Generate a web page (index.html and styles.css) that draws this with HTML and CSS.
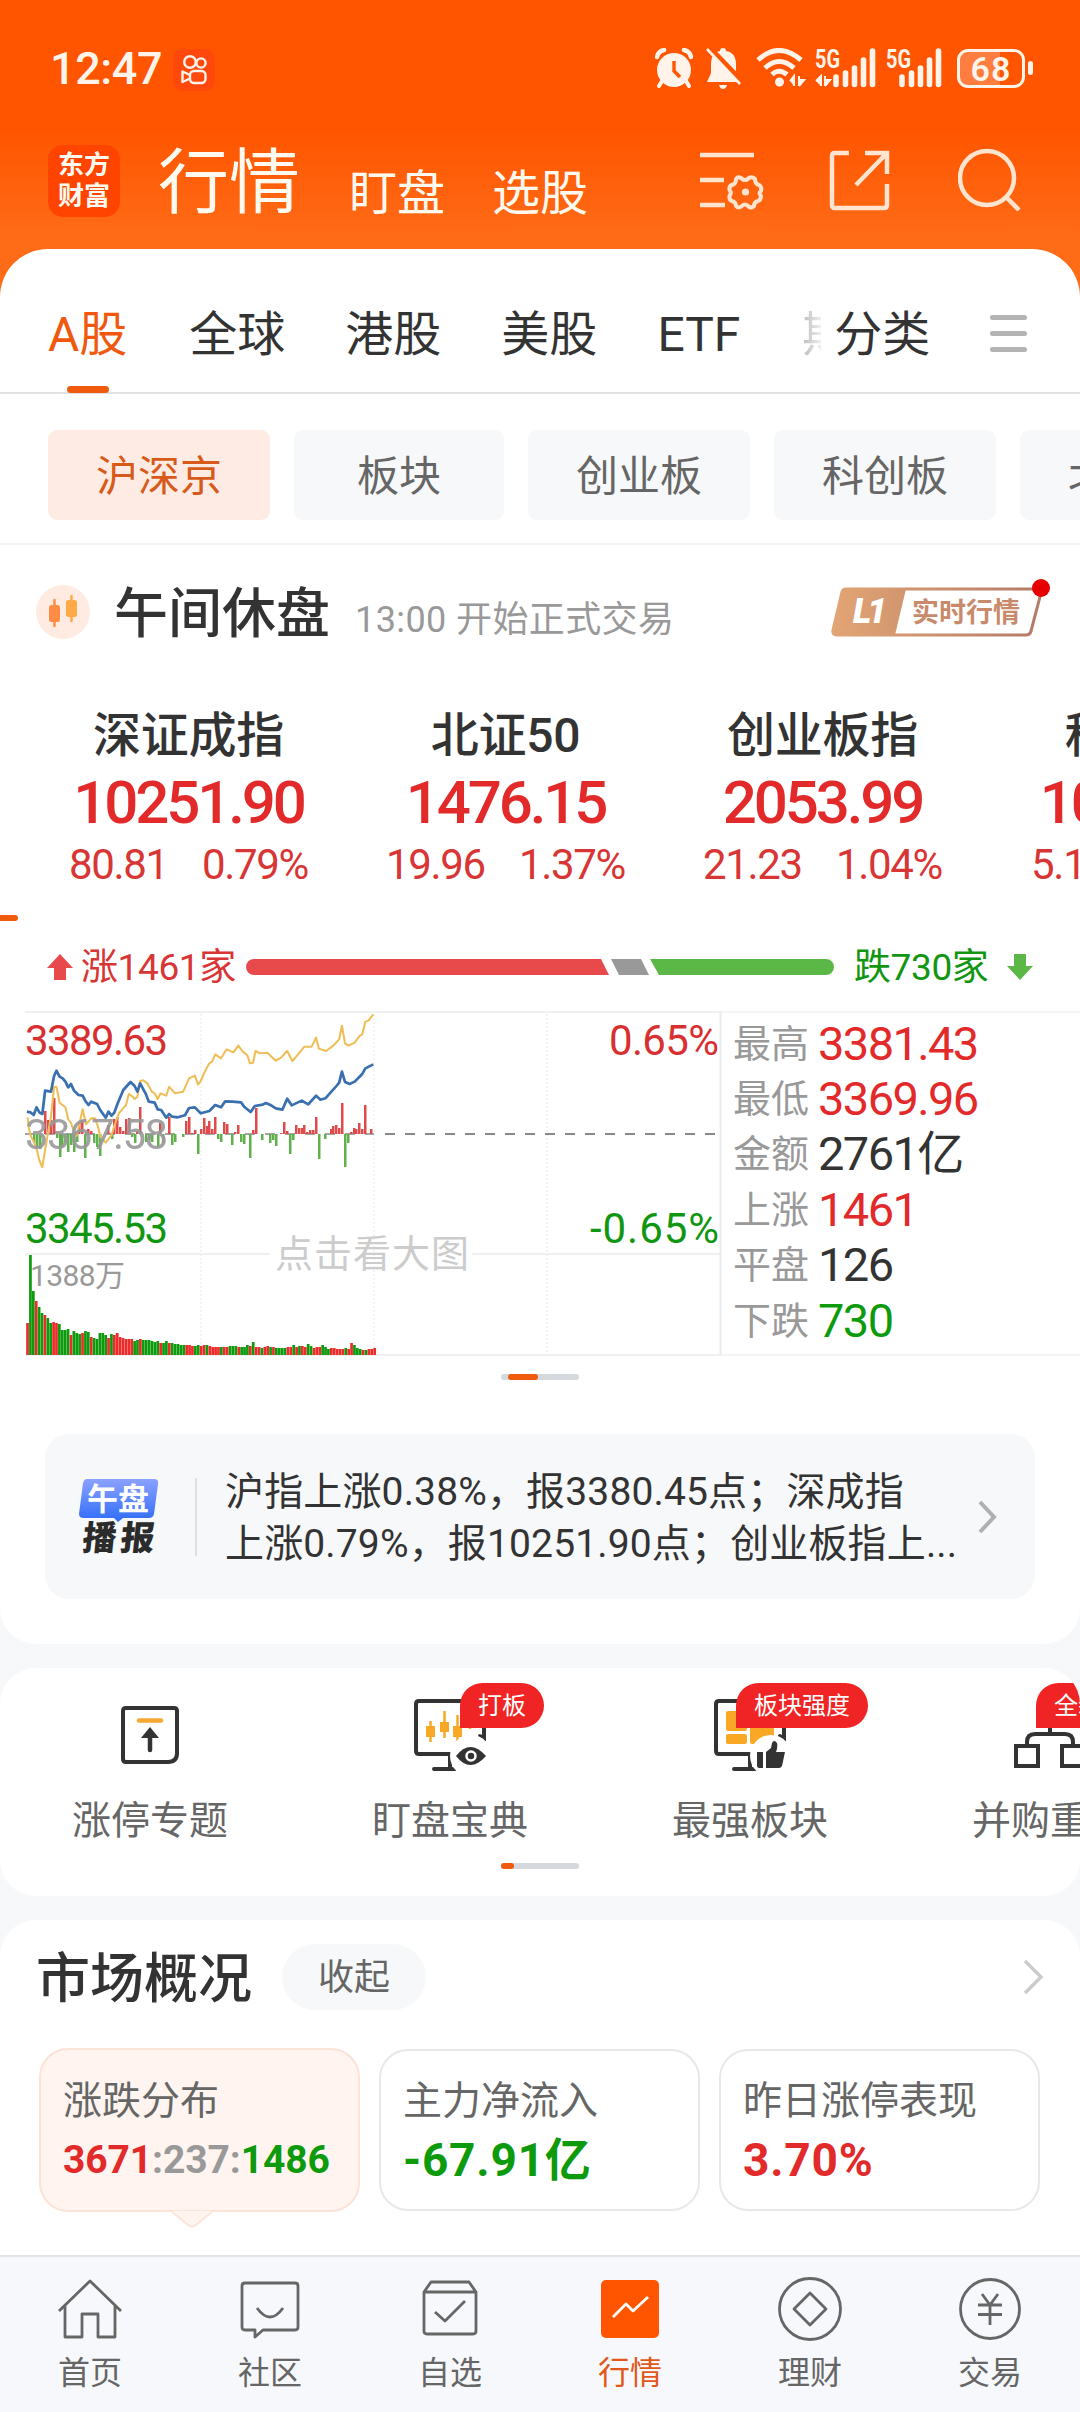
FILE: index.html
```
<!DOCTYPE html>
<html lang="zh-CN">
<head>
    <meta charset="UTF-8">
    <title>行情</title>
    <link rel="stylesheet" href="styles.css">
</head>
<body>
    <div class="header">
        <div class="status-bar">
            <div class="status-time">12:47</div>
            <div class="status-app">
                <svg width="42" height="42" viewBox="0 0 42 42" fill="none" stroke="#fff3ea" stroke-width="2.4">
                    <circle cx="17" cy="13" r="5.8"/>
                    <circle cx="28" cy="14" r="4.6"/>
                    <rect x="17" y="22" width="15.500" height="12" rx="4"/>
                    <path d="M17 26L9.500 22.500V33L17 29.500" stroke-linejoin="round"/>
                </svg>
            </div>
            <div class="status-icons">
                <svg class="icon-alarm" width="38" height="40" viewBox="0 0 38 40">
                    <circle cx="19" cy="22" r="17" fill="#fff3ea"/>
                    <path d="M2 9A9 9 0 0 1 9 2M36 9A9 9 0 0 0 29 2" stroke="#fff3ea" stroke-width="4.500" fill="none" stroke-linecap="round"/>
                    <path d="M7 33L4 38M31 33L34 38" stroke="#fff3ea" stroke-width="4" stroke-linecap="round"/>
                    <path d="M19 13V23L25 29" stroke="#ff5500" stroke-width="3.400" fill="none"/>
                </svg>
                <svg class="icon-bell" width="36" height="42" viewBox="0 0 36 42">
                    <path d="M17 1C19 1 20 2 20 4C27 5 30 10 30 17V26L34 35H1L5 26V17C5 10 8 5 14 4C14 2 15 1 17 1Z" fill="#fff3ea"/>
                    <path d="M13 38H21Q20 42 17 42Q14 42 13 38Z" fill="#fff3ea"/>
                    <path d="M3 0L37 35" stroke="#ff5500" stroke-width="5"/>
                    <path d="M1 2L34 37" stroke="#fff3ea" stroke-width="2.600"/>
                </svg>
                <svg class="icon-wifi" width="50" height="40" viewBox="0 0 50 40">
                    <path d="M2 12Q23 -7 45 12M9 20Q23 7 38 20M16 26.500Q23 20 31 26.500" fill="none" stroke="#fff3ea" stroke-width="5"/>
                    <circle cx="23.500" cy="34" r="4.500" fill="#fff3ea"/>
                    <path d="M34 33L38 28V38M43 38V28M43 38L48 32H43" fill="#fff3ea" stroke="#fff3ea" stroke-width="2"/>
                </svg>
                <svg class="icon-signal" width="62" height="40" viewBox="0 0 62 40">
                    <text x="0" y="20" class="signal-text" textLength="25" lengthAdjust="spacingAndGlyphs">5G</text>
                    <path d="M21 29V36.500M30.500 25V36.500M39.500 20V36.500M48.500 12V36.500M57.500 3V36.500" stroke="#fff3ea" stroke-width="5.600" stroke-linecap="round"/>
                    <path d="M1 33L6 28V38M10 38V28M10 38L15 32H10" fill="#fff3ea" stroke="#fff3ea" stroke-width="2"/>
                </svg>
                <svg class="icon-signal" width="57" height="40" viewBox="0 0 57 40">
                    <text x="0" y="20" class="signal-text" textLength="25" lengthAdjust="spacingAndGlyphs">5G</text>
                    <path d="M16 29V36.500M25.500 25V36.500M34.500 20V36.500M43.500 12V36.500M52.500 3V36.500" stroke="#fff3ea" stroke-width="5.600" stroke-linecap="round"/>
                </svg>
                <div class="battery"><span>68</span></div>
                <div class="battery-tip"></div>
            </div>
        </div>
        <div class="title-bar">
            <div class="logo"><span>东方</span><span>财富</span></div>
            <div class="title-main">行情</div>
            <div class="title-sub">盯盘</div>
            <div class="title-sub">选股</div>
            <div class="title-icons">
                <svg width="64" height="64" viewBox="0 0 64 64" fill="none" stroke="#ffe4d0" stroke-width="4.500">
                    <path d="M0 8H54M0 33H24M0 58H25"/>
                    <path d="M41 31Q45 35 49 31Q52 29 55 32Q55 37 59 38Q62 40 61 44Q58 46 61 49Q61 53 58 54Q54 55 54 59Q51 62 48 59Q45 56 42 59Q38 62 36 59Q36 55 32 54Q29 53 29.500 49Q32 46 29.500 43Q29 39 32 38Q36 37 36 32Q38 29 41 31Z" stroke-linejoin="round" stroke-width="4"/>
                    <circle cx="45.500" cy="45" r="3.600" fill="#ffe4d0" stroke="none"/>
                </svg>
                <svg width="64" height="64" viewBox="0 0 64 64" fill="none" stroke="#ffe4d0" stroke-width="4.500">
                    <path d="M25 6H11Q8 6 8 9V58Q8 61 11 61H60Q63 61 63 58V37" transform="translate(-5 0)"/>
                    <path d="M36 6H58V27M57 7L27 38"/>
                </svg>
                <svg width="64" height="64" viewBox="0 0 64 64" fill="none" stroke="#ffe4d0" stroke-width="4.500">
                    <circle cx="29" cy="31" r="27"/>
                    <path d="M48 50L61 63"/>
                </svg>
            </div>
        </div>
    </div>

    <div class="panel panel-main">
        <div class="tabs">
            <div class="tab tab-active">A股</div>
            <div class="tab">全球</div>
            <div class="tab">港股</div>
            <div class="tab">美股</div>
            <div class="tab">ETF</div>
            <div class="tab-cut">期</div>
            <div class="tab tab-sort">分类</div>
            <div class="tab-menu"><i></i><i></i><i></i></div>
        </div>
        <div class="chips">
            <div class="chip chip-active">沪深京</div>
            <div class="chip chip-short">板块</div>
            <div class="chip">创业板</div>
            <div class="chip">科创板</div>
            <div class="chip">北证板</div>
        </div>

        <div class="session">
            <svg class="session-icon" width="54" height="54" viewBox="0 0 54 54">
                <circle cx="27" cy="27" r="27" fill="#ffebe1"/>
                <path d="M18.500 15V41" stroke="#ff8c45" stroke-width="2.500" stroke-linecap="round"/>
                <rect x="13" y="20" width="11" height="17" rx="2.500" fill="#ff8c45"/>
                <path d="M35.500 11V36" stroke="#ffaa48" stroke-width="2.500" stroke-linecap="round"/>
                <rect x="30" y="15" width="11" height="17" rx="2.500" fill="#ffaa48"/>
            </svg>
            <div class="session-title">午间休盘</div>
            <div class="session-note">13:00 开始正式交易</div>
            <div class="level">
                <svg width="214" height="50" viewBox="0 0 214 50">
                    <defs>
                        <linearGradient id="bronze" gradientUnits="userSpaceOnUse" x1="0" y1="0" x2="214" y2="0">
                            <stop offset="0" stop-color="#e3a574"/>
                            <stop offset="1" stop-color="#b27a68"/>
                        </linearGradient>
                    </defs>
                    <path d="M15 2H206Q211 2 210 6L200 44Q199 48 195 48H6Q1 48 2 43L11 5Q12 2 15 2Z" fill="#fff" stroke="url(#bronze)" stroke-width="3"/>
                    <path d="M15 2H75L64 48H6Q1 48 2 43L11 5Q12 2 15 2Z" fill="url(#bronze)"/>
                    <text x="22" y="36" class="level-tag" textLength="34">L1</text>
                    <text x="81" y="35" class="level-text" textLength="108">实时行情</text>
                </svg>
                <div class="dot"></div>
            </div>
        </div>

        <div class="indices">
            <div class="index">
                <div class="index-name">深证成指</div>
                <div class="index-value">10251.90</div>
                <div class="index-delta"><span>80.81</span><span>0.79%</span></div>
            </div>
            <div class="index">
                <div class="index-name">北证50</div>
                <div class="index-value">1476.15</div>
                <div class="index-delta"><span>19.96</span><span>1.37%</span></div>
            </div>
            <div class="index">
                <div class="index-name">创业板指</div>
                <div class="index-value">2053.99</div>
                <div class="index-delta"><span>21.23</span><span>1.04%</span></div>
            </div>
            <div class="index">
                <div class="index-name">科创50</div>
                <div class="index-value">1006.32</div>
                <div class="index-delta"><span>5.13</span><span>0.51%</span></div>
            </div>
        </div>
        <div class="index-mark"></div>

        <div class="breadth">
            <svg width="26" height="26" viewBox="0 0 26 26"><path d="M13 0L26 14H19V26H7V14H0Z" fill="#e84a4c"/></svg>
            <div class="breadth-up">涨1461家</div>
            <svg class="breadth-bar" width="588" height="16" viewBox="0 0 588 16">
                <path d="M8 0H355L363 16H8A8 8 0 0 1 8 0Z" fill="#e84a4c"/>
                <path d="M365 0H395L403 16H373Z" fill="#999"/>
                <path d="M404 0H580A8 8 0 0 1 580 16H413Z" fill="#5cb846"/>
            </svg>
            <div class="breadth-down">跌730家</div>
            <svg width="26" height="26" viewBox="0 0 26 26"><path d="M13 26L26 12H19V0H7V12H0Z" fill="#5cb846"/></svg>
        </div>

        <div class="quote">
            <svg class="chart" width="722" height="360" viewBox="0 0 722 360">
                <path d="M25 12H722M25 254H270M472 254H720M25 355H722" stroke="#f0f0f0" stroke-width="2"/>
                <path d="M720.500 12V355" stroke="#ececec" stroke-width="2"/>
                <path d="M201 14V355M374 14V355M547 14V355" stroke="#f0f0f0" stroke-width="1.500" stroke-dasharray="2 2"/>
                <path d="M25 134H374" stroke="#888" stroke-width="1.500" stroke-dasharray="10 10"/>
                <path d="M385 134H718" stroke="#888" stroke-width="2" stroke-dasharray="10 10"/>
                <g id="flow-bars"></g>
                <g id="volume-bars"></g>
                <g transform="scale(.34435 .33333)" fill="none" stroke-linejoin="round">
                    <polyline stroke="#efbe56" stroke-width="6" points="80,352 84,385 88,405 98,425 106,445 114,480 123,502 131,450 139,400 148,350 157,262 164,260 173,308 190,322 198,358 206,368 215,395 223,408 231,370 240,328 250,373 265,355 276,355 284,378 292,412 307,428 324,405 332,378 345,340 360,322 366,315 374,282 385,290 391,297 399,290 407,243 416,241 428,250 441,275 449,280 458,297 466,280 483,287 491,260 508,280 532,275 549,235 566,227 575,254 583,243 596,212 608,190 616,185 625,163 642,175 658,148 678,157 692,137 705,155 718,165 726,190 735,188 742,153 755,160 776,158 801,182 816,173 834,153 849,183 860,170 884,140 905,140 918,113 926,146 947,153 968,137 985,118 993,77 1002,130 1012,137 1030,128 1045,107 1052,103 1061,65 1070,62 1084,43"/>
                    <polyline stroke="#3a70b0" stroke-width="8" points="78,335 88,337 98,345 106,322 115,338 123,342 131,272 148,275 157,228 164,212 173,230 182,235 190,245 198,262 206,252 215,272 228,285 240,287 248,303 257,315 265,305 282,312 291,330 307,353 315,335 324,347 332,338 341,312 358,270 379,246 391,258 399,275 407,250 424,283 432,305 449,308 458,328 468,330 483,353 491,342 500,350 516,352 537,346 549,324 566,322 583,340 608,333 625,315 642,322 654,304 675,305 700,307 709,320 728,336 740,318 763,314 772,309 784,314 801,325 820,329 834,296 847,316 876,302 895,313 918,287 930,299 945,295 977,258 985,248 993,215 1002,246 1015,252 1030,245 1052,222 1061,205 1084,193"/>
                </g>
                <g class="axis">
                    <text x="25" y="55" textLength="143" fill="#d83030">3389.63</text>
                    <text x="25" y="149" textLength="143" fill="#999" opacity=".9">3367.58</text>
                    <text x="25" y="243" textLength="143" fill="#119611">3345.53</text>
                    <text x="609" y="55" textLength="110" fill="#d83030">0.65%</text>
                    <text x="590" y="243" textLength="129" fill="#119611">-0.65%</text>
                </g>
                <text x="30" y="286" class="axis-small" textLength="95">1388万</text>
                <text x="275" y="267" class="hint" textLength="194">点击看大图</text>
            </svg>
            <div class="facts">
                <div class="fact"><span>最高</span><b class="red">3381.43</b></div>
                <div class="fact"><span>最低</span><b class="red">3369.96</b></div>
                <div class="fact"><span>金额</span><b>2761亿</b></div>
                <div class="fact"><span>上涨</span><b class="red">1461</b></div>
                <div class="fact"><span>平盘</span><b>126</b></div>
                <div class="fact"><span>下跌</span><b class="green">730</b></div>
            </div>
        </div>
        <div class="pager"><div class="pager-thumb pager-thumb-mid"></div></div>

        <div class="news">
            <svg class="news-icon" width="80" height="76" viewBox="0 0 80 76">
                <defs>
                    <linearGradient id="noon" x1="0" y1="0" x2="0" y2="1">
                        <stop offset="0" stop-color="#8ba2ff"/>
                        <stop offset="1" stop-color="#2f6cf8"/>
                    </linearGradient>
                </defs>
                <path d="M8 0H75Q80 0 79 5L75 35Q74 39 70 39H44L39 43L35 39H5Q0 39 0 35L4 4Q5 0 8 0Z" fill="url(#noon)"/>
                <text x="8" y="31" class="news-top" textLength="62">午盘</text>
                <text x="10" y="71" class="news-bottom" textLength="72" transform="skewX(-6)">播报</text>
            </svg>
            <div class="news-line"></div>
            <div class="news-text">沪指上涨0.38%，报3380.45点；深成指<br>上涨0.79%，报10251.90点；创业板指上...</div>
            <svg class="news-arrow" width="20" height="34" viewBox="0 0 20 34"><path d="M2 2L16 17L2 32" fill="none" stroke="#b0b0b0" stroke-width="4"/></svg>
        </div>
    </div>

    <div class="panel panel-tools">
        <div class="tools">
            <div class="tool">
                <svg width="72" height="72" viewBox="0 0 72 72">
                    <path d="M12 9H60Q63 9 63 12V54Q63 63 54 63H12Q9 63 9 60V12Q9 9 12 9Z" fill="none" stroke="#333" stroke-width="4"/>
                    <path d="M25 21.500H47" stroke="#f5a832" stroke-width="4.500" stroke-linecap="round"/>
                    <path d="M36 28L45 39H27Z" fill="#333"/>
                    <path d="M36 34V51" stroke="#333" stroke-width="4.500" stroke-linecap="round"/>
                </svg>
                <div class="tool-name">涨停专题</div>
            </div>
            <div class="tool">
                <svg width="72" height="72" viewBox="0 0 72 72">
                    <path d="M36 55H5Q2 55 2 52V5Q2 2 5 2H67Q70 2 70 5V40L66 37M20 70H42M36 55V70" fill="none" stroke="#333" stroke-width="4" stroke-linecap="round"/>
                    <path d="M16.500 22V43M30.500 12V39M43.500 16V44M56 20V30" stroke="#f9a825" stroke-width="2.500"/>
                    <path d="M12 27H21V38H12ZM26 23H35V33H26ZM39 27H48V38H39Z" fill="#f9a825"/>
                    <circle cx="57" cy="57" r="21" fill="#fff"/>
                    <path d="M42 57Q56 39 72 57Q56 75 42 57Z" fill="#333"/>
                    <circle cx="57" cy="57" r="4.500" fill="#333" stroke="#fff" stroke-width="2.500"/>
                </svg>
                <div class="tool-badge">打板</div>
                <div class="tool-name">盯盘宝典</div>
            </div>
            <div class="tool">
                <svg width="72" height="72" viewBox="0 0 72 72">
                    <path d="M36 55H5Q2 55 2 52V5Q2 2 5 2H67Q70 2 70 5V40L66 37M20 70H42M36 55V70" fill="none" stroke="#333" stroke-width="4" stroke-linecap="round"/>
                    <rect x="12" y="12" width="21" height="20" rx="2" fill="#f9a825"/>
                    <rect x="12" y="35" width="21" height="10" rx="2" fill="#f9a825"/>
                    <rect x="36" y="12" width="24" height="33" rx="2" fill="#f9a825"/>
                    <circle cx="57" cy="57" r="21" fill="#fff"/>
                    <path d="M43 53H49V69H45Q43 69 43 66ZM52 53L57 49L58 44Q60 40 63 44Q64 48 62 53H71L68 67Q67 69 65 69H52Z" fill="#333"/>
                </svg>
                <div class="tool-badge">板块强度</div>
                <div class="tool-name">最强板块</div>
            </div>
            <div class="tool">
                <svg width="72" height="72" viewBox="0 0 72 72" fill="none" stroke="#333" stroke-width="4">
                    <rect x="2" y="47" width="22" height="20"/>
                    <rect x="48" y="47" width="22" height="20"/>
                    <path d="M13 46V43Q13 35 21 35H51Q59 35 59 43V46M36 35V24"/>
                </svg>
                <div class="tool-badge">全新</div>
                <div class="tool-name">并购重组</div>
            </div>
        </div>
        <div class="pager"><div class="pager-thumb"></div></div>
    </div>

    <div class="panel panel-market">
        <div class="market-head">
            <div class="market-title">市场概况</div>
            <div class="market-fold">收起</div>
            <svg class="market-arrow" width="22" height="36" viewBox="0 0 22 36"><path d="M2 2L18 18L2 34" fill="none" stroke="#ccc" stroke-width="3.500"/></svg>
        </div>
        <div class="stats">
            <div class="stat stat-active">
                <div class="stat-name">涨跌分布</div>
                <div class="stat-ratio"><span class="red">3671</span>:237:<span class="green">1486</span></div>
                <svg class="stat-tip" width="42" height="17" viewBox="0 0 42 17"><path d="M0 0L17 14Q21 17 25 14L42 0" fill="#fff4ef" stroke="#fbe3d8" stroke-width="2"/><path d="M2 0H40" stroke="#fff4ef" stroke-width="4"/></svg>
            </div>
            <div class="stat">
                <div class="stat-name">主力净流入</div>
                <div class="stat-value green">-67.91亿</div>
            </div>
            <div class="stat">
                <div class="stat-name">昨日涨停表现</div>
                <div class="stat-value red">3.70%</div>
            </div>
        </div>
    </div>

    <div class="nav">
        <div class="nav-item">
            <svg width="66" height="66" viewBox="0 0 66 66"><path d="M2 35L33 5L64 35M8 30V61H25V38H41V61H58V30" /></svg>
            <span>首页</span>
        </div>
        <div class="nav-item">
            <svg width="66" height="66" viewBox="0 0 66 66"><path d="M8 7H58Q61 7 61 10V51Q61 54 58 54H26L18 61V54H8Q5 54 5 51V10Q5 7 8 7ZM20 32Q33 50 46 32" /></svg>
            <span>社区</span>
        </div>
        <div class="nav-item">
            <svg width="66" height="66" viewBox="0 0 66 66"><path d="M7 16L14 6H52L59 16V55Q59 58 56 58H10Q7 58 7 55ZM7 16H59M18 36L28 45L48 25" /></svg>
            <span>自选</span>
        </div>
        <div class="nav-item nav-active">
            <svg width="66" height="66" viewBox="0 0 66 66"><rect x="4" y="4" width="58" height="58" rx="5" fill="#ff5500" stroke="none"/><path d="M16 41L29 28L36 35L51 21" stroke="#fff"/></svg>
            <span>行情</span>
        </div>
        <div class="nav-item">
            <svg width="66" height="66" viewBox="0 0 66 66"><circle cx="33" cy="33" r="30.500"/><path d="M33 17L49 33L33 49L17 33Z"/></svg>
            <span>理财</span>
        </div>
        <div class="nav-item">
            <svg width="66" height="66" viewBox="0 0 66 66"><circle cx="33" cy="33" r="29.500"/><path d="M25 18L33 29L41 18M33 29V49M21 29H45M21 38.500H45"/></svg>
            <span>交易</span>
        </div>
    </div>

    <script>
        var BAR_STEP = 2.893;

        // capital flow bars: [x, height], positive is above the zero line
        var flows = [
            [45, 23], [48, 14], [51, 14], [54, 36], [79, 11], [82, 14], [88, 5], [91, 3], [108, 9], [114, 15],
            [117, 17], [120, 7], [123, 3], [126, 15], [129, 16], [137, 3], [140, 27], [160, 11], [169, 17],
            [186, 13], [189, 17], [192, 1], [195, 4], [201, 5], [204, 16], [207, 8], [209, 13], [212, 5],
            [215, 17], [224, 12], [227, 10], [235, 2], [238, 9], [253, 4], [256, 26], [281, 1], [284, 12],
            [287, 3], [296, 9], [299, 6], [302, 6], [304, 9], [307, 2], [310, 4], [313, 4], [316, 17],
            [331, 5], [333, 8], [336, 9], [339, 6], [342, 31], [351, 2], [354, 6], [356, 5], [359, 11],
            [362, 5], [365, 29], [371, 5], [34, -9], [37, -13], [40, -15], [57, -4], [60, -23], [62, -13],
            [65, -9], [68, -18], [71, -11], [74, -18], [77, -8], [85, -24], [94, -9], [97, -13], [100, -22],
            [112, -5], [132, -3], [135, -9], [146, -8], [149, -6], [152, -8], [158, -13], [163, -9],
            [172, -11], [175, -8], [183, -3], [198, -20], [218, -5], [221, -8], [232, -11], [241, -8],
            [244, -10], [250, -24], [262, -6], [270, -9], [273, -6], [276, -12], [290, -20], [293, -6],
            [319, -25], [325, -5], [345, -33], [348, -9]
        ];

        // volume per minute, the letter is the direction (r/g)
        var volumes = '32r 100g 64g 54r 48g 42g 40r 37g 32g 33r 32r 31g 25g 25g 26g 20r 24g 22g 21g 22r 24g 23g 18r 17g 16g 22g 22g 20g 17r 21g 20r 22r 18r 17r 16r 16r 16r 14g 15g 16r 15g 15g 15g 14g 13g 14g 12r 12g 14g 12r 12g 11g 11g 10g 10g 10r 10r 9r 9g 10g 9r 10r 10g 9r 8r 8r 8r 8g 8r 8r 9g 9g 9g 8r 8g 8g 10g 9r 13g 8r 8r 7g 8r 9r 8g 8r 7g 7g 7g 7g 8r 8r 10g 8r 9g 9r 8r 11g 9g 7r 8r 8r 10g 8g 6g 7r 7r 6r 6r 6r 7g 6r 12r 10g 7g 6g 5r 5g 6r 6r 7r 10r 7r 7r 9r'.split(' ').slice(0, 121);

        function renderFlows() {
            var html = '';
            flows.forEach((f) => {
                var color = f[1] > 0 ? '#e04a4a' : '#60b04c';
                html += `<rect x="${f[0] - 1}" y="${f[1] > 0 ? 134 - f[1] : 134}" width="2.500" height="${Math.abs(f[1])}" fill="${color}"/>`;
            });
            document.getElementById('flow-bars').innerHTML = html;
        }

        function renderVolumes() {
            var html = '';
            volumes.forEach((v, i) => {
                var h = parseInt(v);
                var color = v.endsWith('r') ? '#ec2b2b' : '#0d9a0d';
                html += `<rect x="${(26.2 + i * BAR_STEP).toFixed(2)}" y="${355 - h}" width="2.700" height="${h}" fill="${color}"/>`;
            });
            document.getElementById('volume-bars').innerHTML = html;
        }

        renderFlows();
        renderVolumes();
    </script>
</body>
</html>
```
FILE: styles.css
```
* {
    box-sizing: border-box;
}
body {
    margin: 0;
    width: 1080px;
    height: 2412px;
    overflow: hidden;
    display: flex;
    flex-direction: column;
    background: #f7f8fa;
    color: #333;
    font-family: Roboto, "Noto Sans CJK SC", sans-serif;
    white-space: nowrap;
}
svg {
    display: block;
    flex: none;
}
.red {
    color: #e32a2a;
}
.green {
    color: #0d9a0d;
}

/* header */
.header {
    height: 300px;
    margin-bottom: -51px;
    flex: none;
    background: linear-gradient(#ff5500 0, #ff5500 130px, #ff6c18 240px, #ff6c18 100%);
}
.status-bar {
    height: 130px;
    padding: 3px 47px 0 50px;
    display: flex;
    align-items: center;
    color: #fff3ea;
}
.status-time {
    width: 123px;
    padding-top: 3px;
    font-size: 45px;
    font-weight: 500;
    letter-spacing: -0.4px;
}
.status-app {
    width: 42px;
    height: 42px;
    margin-top: 6px;
    border-radius: 10px;
    background: #ff480c;
}
.status-icons {
    flex: 1;
    display: flex;
    justify-content: flex-end;
    align-items: center;
    padding-top: 3px;
}
.icon-bell {
    margin-left: 13px;
}
.icon-wifi {
    margin-left: 14px;
}
.icon-signal {
    margin-left: 9px;
    overflow: visible;
}
.signal-text {
    font-size: 26px;
    font-weight: 700;
    fill: #fff3ea;
}
.battery {
    width: 68px;
    height: 39px;
    margin-left: 14px;
    border: 3px solid #fff3ea;
    border-radius: 11px;
    background: linear-gradient(90deg, #ff7d3e 65%, #ff5500 65%);
    font-size: 34px;
    font-weight: 600;
    line-height: 34px;
    text-align: center;
    letter-spacing: 1px;
}
.battery-tip {
    width: 5px;
    height: 14px;
    margin-left: 3px;
    border-radius: 3px;
    background: #fff3ea;
}
.title-bar {
    height: 102px;
    padding-left: 48px;
    padding-right: 58px;
    padding-top: 15px;
    display: flex;
    align-items: flex-start;
    color: #fffaf0;
}
.logo {
    width: 72px;
    height: 72px;
    padding-top: 5px;
    border-radius: 15px;
    background: #ff4400;
    display: flex;
    flex-direction: column;
    align-items: center;
    font-size: 26px;
    line-height: 31px;
    font-weight: 700;
}
.title-main {
    margin-left: 38px;
    width: 191px;
    font-size: 71px;
    line-height: 75px;
}
.title-sub {
    width: 143px;
    font-size: 48px;
    line-height: 98px;
}
.title-icons {
    flex: 1;
    display: flex;
    justify-content: flex-end;
    gap: 65px;
    padding-top: 2px;
}

/* market panel */
.panel {
    background: #fff;
    border-radius: 36px;
    flex: none;
    overflow: hidden;
}
.panel-main {
    height: 1395px;
    border-radius: 48px 48px 36px 36px;
    display: flex;
    flex-direction: column;
}
.tabs {
    height: 145px;
    flex: none;
    border-bottom: 2px solid #e2e2e2;
    display: flex;
    align-items: flex-start;
    padding: 50px 53px 0 48px;
    font-size: 48px;
    line-height: 72px;
}
.tab {
    margin-right: 60px;
}
.tab-active {
    margin-right: 62px;
    color: #f0580d;
    height: 94px;
    display: flex;
    flex-direction: column;
    align-items: center;
}
.tab-active::after {
    content: "";
    width: 42px;
    height: 7px;
    margin-top: 15px;
    border-radius: 4px;
    background: #f05a0d;
    flex: none;
}
.tab-cut {
    width: 19px;
    margin-left: 2px;
    margin-right: 13px;
    overflow: hidden;
    color: transparent;
    background: linear-gradient(90deg, #bbb, #eee);
    -webkit-background-clip: text;
    background-clip: text;
}
.tab-sort {
    margin-right: 0;
}
.tab-menu {
    margin-left: auto;
    margin-top: 16px;
    width: 37px;
    height: 37px;
    display: flex;
    flex-direction: column;
    justify-content: space-between;
}
.tab-menu i {
    height: 5px;
    border-radius: 3px;
    background: #b3b3b3;
}
.chips {
    height: 151px;
    flex: none;
    border-bottom: 2px solid #f4f4f4;
    padding: 36px 0 0 48px;
    display: flex;
    gap: 24px;
}
.chip {
    width: 222px;
    height: 90px;
    flex: none;
    border-radius: 9px;
    background: #f7f8fa;
    color: #666;
    font-size: 42px;
    line-height: 93px;
    text-align: center;
}
.chip-short {
    width: 210px;
}
.chip-active {
    background: #feece4;
    color: #d85a1a;
}
.session {
    height: 134px;
    flex: none;
    padding: 0 35px 0 36px;
    display: flex;
    align-items: center;
}
.session-title {
    margin-left: 24px;
    padding-top: 6px;
    font-size: 54px;
    font-weight: 500;
    line-height: 80px;
}
.session-note {
    margin-left: 25px;
    padding-top: 15px;
    font-size: 36px;
    letter-spacing: 0.4px;
    line-height: 54px;
    color: #999;
}
.level {
    position: relative;
    margin-left: auto;
}
.level-tag {
    font-size: 35px;
    font-weight: 900;
    font-style: italic;
    fill: #fff;
}
.level-text {
    font-size: 27px;
    font-weight: 700;
    fill: #c98a6c;
}
.dot {
    position: absolute;
    right: -5px;
    top: -8px;
    width: 18px;
    height: 18px;
    border-radius: 50%;
    background: #e60000;
}

/* index strip */
.indices {
    height: 235px;
    flex: none;
    padding-left: 30px;
    padding-top: 22px;
    display: flex;
}
.index {
    width: 317px;
    flex: none;
    display: flex;
    flex-direction: column;
    align-items: center;
}
.index-name {
    font-size: 48px;
    font-weight: 500;
    line-height: 70px;
    letter-spacing: -0.3px;
}
.index-value {
    font-size: 60px;
    font-weight: 500;
    line-height: 63px;
    letter-spacing: -3.1px;
    color: #e32a2a;
}
.index-delta {
    display: flex;
    gap: 34px;
    font-size: 42px;
    line-height: 62px;
    letter-spacing: -1.3px;
    color: #d83535;
}
.index-mark {
    width: 18px;
    height: 6px;
    margin-top: 1px;
    flex: none;
    border-radius: 0 3px 3px 0;
    background: #f05a0d;
}
.breadth {
    height: 89px;
    flex: none;
    padding: 2px 47px 0;
    display: flex;
    align-items: center;
    font-size: 37px;
    line-height: 54px;
    letter-spacing: -0.4px;
}
.breadth-up {
    width: 173px;
    padding-left: 8px;
    padding-top: 3px;
    color: #d83535;
}
.breadth-down {
    width: 173px;
    padding-left: 20px;
    padding-top: 3px;
    color: #119611;
}

/* chart */
.quote {
    height: 360px;
    margin-top: -10px;
    flex: none;
    display: flex;
}
.axis {
    font-size: 42px;
}
.axis-small {
    font-size: 30px;
    fill: #999;
}
.hint {
    font-size: 38px;
    fill: #ccc;
}
.facts {
    flex: 1;
    height: 345px;
    margin-top: 11px;
    padding-top: 3px;
    padding-left: 11px;
    border-top: 2px solid #f4f4f4;
    border-bottom: 2px solid #f4f4f4;
}
.fact {
    height: 55.400px;
    display: flex;
    align-items: center;
    line-height: 56px;
}
.fact span {
    width: 85px;
    font-size: 38px;
    color: #999;
}
.fact b {
    font-size: 47px;
    font-weight: 400;
    letter-spacing: -1.6px;
}
.pager {
    width: 78px;
    height: 6px;
    margin: 14px auto 0;
    border-radius: 3px;
    flex: none;
    background: #d5d9de;
}
.pager-thumb {
    width: 13px;
    height: 6px;
    border-radius: 3px;
    background: #f05a0d;
}
.pager-thumb-mid {
    width: 30px;
    margin-left: 7px;
}
.news {
    height: 165px;
    flex: none;
    margin: 54px 45px 0;
    padding: 0 37px 0 34px;
    border-radius: 24px;
    background: #f7f8fa;
    display: flex;
    align-items: center;
}
.news-top {
    font-size: 31px;
    font-weight: 700;
    fill: #fff;
}
.news-bottom {
    font-size: 34px;
    font-weight: 900;
    fill: #2b2b2b;
}
.news-line {
    width: 2px;
    height: 78px;
    margin-left: 36px;
    background: #dfdfdf;
}
.news-text {
    margin-left: 28px;
    padding-top: 3px;
    font-size: 39px;
    line-height: 52px;
    letter-spacing: 0.15px;
}
.news-arrow {
    margin-left: auto;
}

/* tools */
.panel-tools {
    height: 228px;
    margin-top: 24px;
}
.tools {
    height: 181px;
    display: flex;
    overflow: hidden;
}
.tool {
    position: relative;
    width: 300px;
    flex: none;
    padding-top: 31px;
    display: flex;
    flex-direction: column;
    align-items: center;
}
.tool-badge {
    position: absolute;
    left: 160px;
    top: 15px;
    height: 45px;
    padding: 0 18px;
    border-radius: 23px 23px 23px 0;
    background: #f02424;
    color: #fff;
    font-size: 24px;
    line-height: 47px;
}
.tool:nth-child(3) .tool-badge,
.tool:nth-child(4) .tool-badge {
    left: 136px;
}
.tool-name {
    margin-top: 21px;
    font-size: 39px;
    line-height: 58px;
    color: #666;
}

/* market overview */
.panel-market {
    height: 335px;
    margin-top: 24px;
    border-radius: 36px 36px 0 0;
}
.market-head {
    height: 114px;
    padding: 0 35px 0 36px;
    display: flex;
    align-items: center;
}
.market-title {
    width: 246px;
    padding-top: 6px;
    font-size: 54px;
    font-weight: 500;
    line-height: 76px;
}
.market-fold {
    width: 144px;
    height: 66px;
    border-radius: 33px;
    background: #f7f8fa;
    color: #666;
    font-size: 36px;
    line-height: 69px;
    text-align: center;
}
.market-arrow {
    margin-left: auto;
}
.stats {
    padding: 15px 40px 0 39px;
    display: grid;
    grid-template-columns: repeat(3, 1fr);
    gap: 19px;
}
.stat {
    height: 162px;
    padding: 20px 0 0 22px;
    border: 2px solid #e8e8e8;
    border-radius: 29px;
}
.stat-active {
    position: relative;
    height: 164px;
    margin-top: -1px;
    padding-top: 21px;
    border-color: #fbe3d8;
    background: #fff4ef;
}
.stat-tip {
    position: absolute;
    left: 130px;
    top: 161px;
}
.stat-name {
    font-size: 39px;
    line-height: 60px;
    color: #666;
}
.stat-value {
    font-size: 46px;
    font-weight: 700;
    line-height: 59px;
    letter-spacing: 0.8px;
}
.stat-ratio {
    font-size: 39px;
    font-weight: 700;
    line-height: 59px;
    color: #999;
    letter-spacing: -0.1px;
}

/* bottom nav */
.nav {
    height: 157px;
    flex: none;
    border-top: 2px solid #e4e4e4;
    background: #f7f8fb;
    display: flex;
}
.nav-item {
    width: 180px;
    padding-top: 19px;
    display: flex;
    flex-direction: column;
    align-items: center;
    font-size: 32px;
    line-height: 48px;
    color: #666;
}
.nav-item span {
    margin-top: 7px;
}
.nav-item svg {
    fill: none;
    stroke: #666;
    stroke-width: 2.8px;
    stroke-linejoin: round;
}
.nav-active {
    color: #e0591a;
}
```
